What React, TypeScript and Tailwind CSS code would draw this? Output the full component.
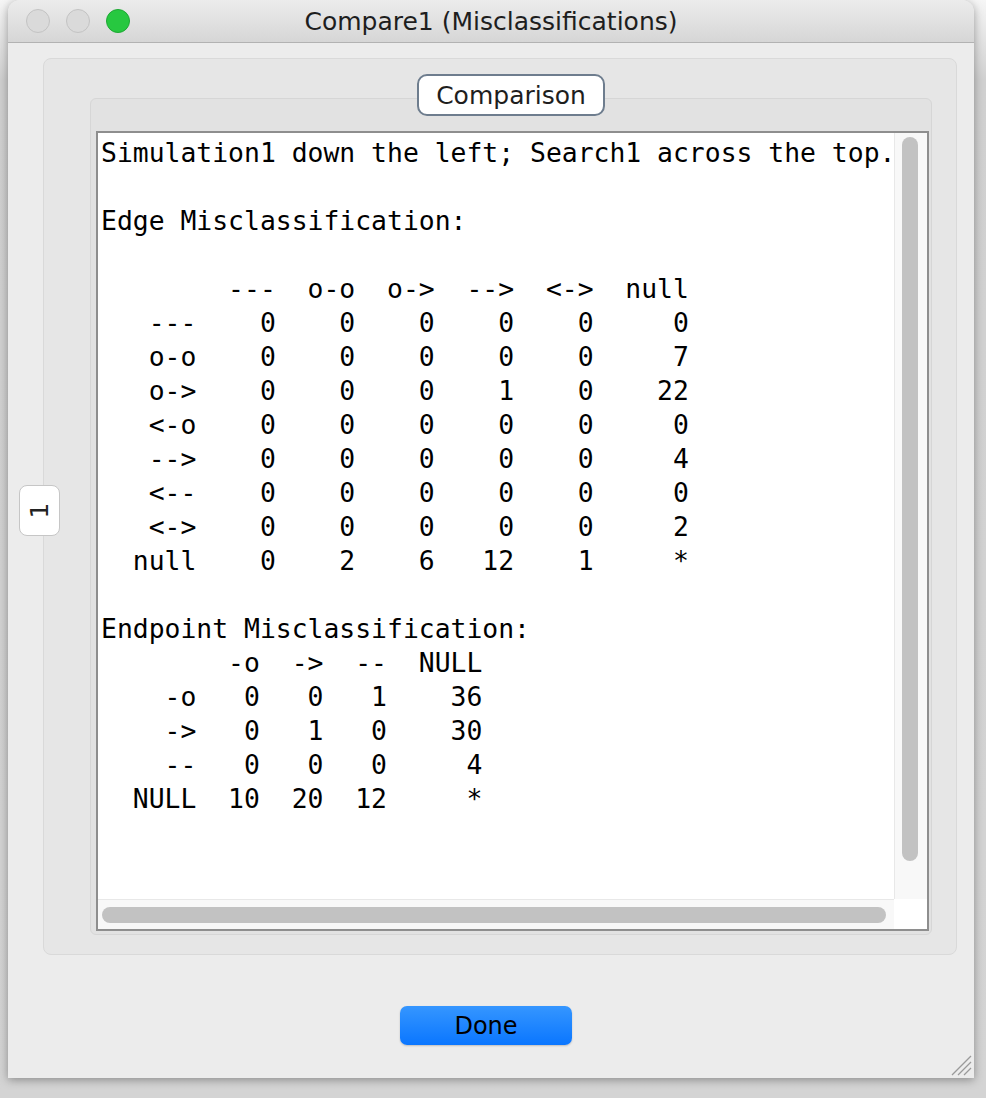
const edgeTable = `Simulation1 down the left; Search1 across the top.

Edge Misclassification:

        ---  o-o  o->  -->  <->  null
   ---    0    0    0    0    0     0
   o-o    0    0    0    0    0     7
   o->    0    0    0    1    0    22
   <-o    0    0    0    0    0     0
   -->    0    0    0    0    0     4
   <--    0    0    0    0    0     0
   <->    0    0    0    0    0     2
  null    0    2    6   12    1     *

Endpoint Misclassification:
        -o  ->  --  NULL
    -o   0   0   1    36
    ->   0   1   0    30
    --   0   0   0     4
  NULL  10  20  12     *`;

function TrafficLights() {
    return (
        <div className="flex items-center gap-[16px] pl-[18px]">
            <div className="w-[24px] h-[24px] rounded-full bg-[#dadada] border border-[#c3c3c3]"></div>
            <div className="w-[24px] h-[24px] rounded-full bg-[#dadada] border border-[#c3c3c3]"></div>
            <div className="w-[24px] h-[24px] rounded-full bg-[#27c840] border border-[#1ea834]"></div>
        </div>
    );
}

function ResizeGrip() {
    return (
        <svg className="absolute right-[2px] bottom-[2px]" width="22" height="22" viewBox="0 0 22 22">
            <line x1="2" y1="21" x2="21" y2="2" stroke="#9a9a9a" strokeWidth="1.2" />
            <line x1="8" y1="21" x2="21" y2="8" stroke="#9a9a9a" strokeWidth="1.2" />
            <line x1="14" y1="21" x2="21" y2="14" stroke="#9a9a9a" strokeWidth="1.2" />
        </svg>
    );
}

function App() {
    return (
        <div className="w-[986px] h-[1098px] pl-[8px] overflow-hidden bg-[linear-gradient(to_bottom,#f6f6f6_0px,#d0d0d0_80px,#d4d4d4_100%)]">
            <div className="relative w-[966px] h-[1078px] flex flex-col bg-[#ececec] rounded-t-[12px] shadow-[0_2px_10px_rgba(0,0,0,0.35)]">
                {/* title bar */}
                <div className="h-[43px] shrink-0 grid grid-cols-[1fr_auto_1fr] items-center rounded-t-[12px] border-b border-[#b2b2b2] bg-[linear-gradient(to_bottom,#ececec,#d6d6d6)]">
                    <TrafficLights />
                    <div className="text-[25px] text-[#1e1e1e] font-['DejaVu_Sans',sans-serif] leading-none">Compare1 (Misclassifications)</div>
                    <div></div>
                </div>

                {/* tabbed pane */}
                <div className="relative mt-[15px] ml-[35px] mr-[17px] h-[897px] box-border rounded-[8px] border border-[#d9d9d9] bg-[#e6e6e6] pl-[46px] pr-[24px] pt-[39px] pb-[19px]">
                    <div className="absolute left-[-25px] top-[426px] w-[41px] h-[51px] rounded-[8px] border border-[#c6c6c6] bg-white flex items-center justify-center">
                        <span className="-rotate-90 text-[25px] leading-none text-[#222] font-['DejaVu_Sans',sans-serif]">1</span>
                    </div>

                    <div className="relative h-full box-border rounded-[6px] border border-[#d6d6d6] bg-[#e2e2e2] pl-[5px] pr-[2px] pt-[32px] pb-[3px]">
                        <div className="absolute left-1/2 -translate-x-1/2 top-[-25px] w-[188px] h-[42px] box-border rounded-[10px] border-2 border-[#6e7d8e] bg-white flex items-center justify-center">
                            <span className="text-[25px] leading-none text-[#1e1e1e] font-['DejaVu_Sans',sans-serif]">Comparison</span>
                        </div>

                        {/* text area */}
                        <div className="h-full box-border border-2 border-[#8e8e8e] bg-white flex flex-col">
                            <div className="flex flex-1 min-h-0">
                                <div className="flex-1 min-w-0 overflow-hidden">
                                    <pre className="pl-[3px] pt-[3px] m-0 text-[26.4px] leading-[34px] text-black font-['DejaVu_Sans_Mono',monospace] whitespace-pre">{edgeTable}</pre>
                                </div>
                                <div className="w-[33px] shrink-0 bg-[#f8f8f8] border-l border-[#e8e8e8] pl-[7px] pt-[4px] pb-[38px]">
                                    <div className="w-[16px] h-full rounded-full bg-[#c2c2c2]"></div>
                                </div>
                            </div>
                            <div className="h-[30px] shrink-0 flex">
                                <div className="flex-1 bg-[#f8f8f8] border-t border-[#e8e8e8] pl-[4px] pr-[8px] pt-[7px]">
                                    <div className="h-[16px] rounded-full bg-[#c2c2c2]"></div>
                                </div>
                                <div className="w-[33px] bg-white"></div>
                            </div>
                        </div>
                    </div>
                </div>

                {/* button row */}
                <div className="flex justify-center pr-[10px] mt-[51px]">
                    <button className="w-[172px] h-[39px] rounded-[7px] bg-[linear-gradient(to_bottom,#3596ff,#0a76ff)] shadow-[0_1px_2px_rgba(0,0,0,0.2)] text-[24px] leading-none text-black font-['DejaVu_Sans',sans-serif]">
                        Done
                    </button>
                </div>

                <ResizeGrip />
            </div>
        </div>
    );
}

export default App
